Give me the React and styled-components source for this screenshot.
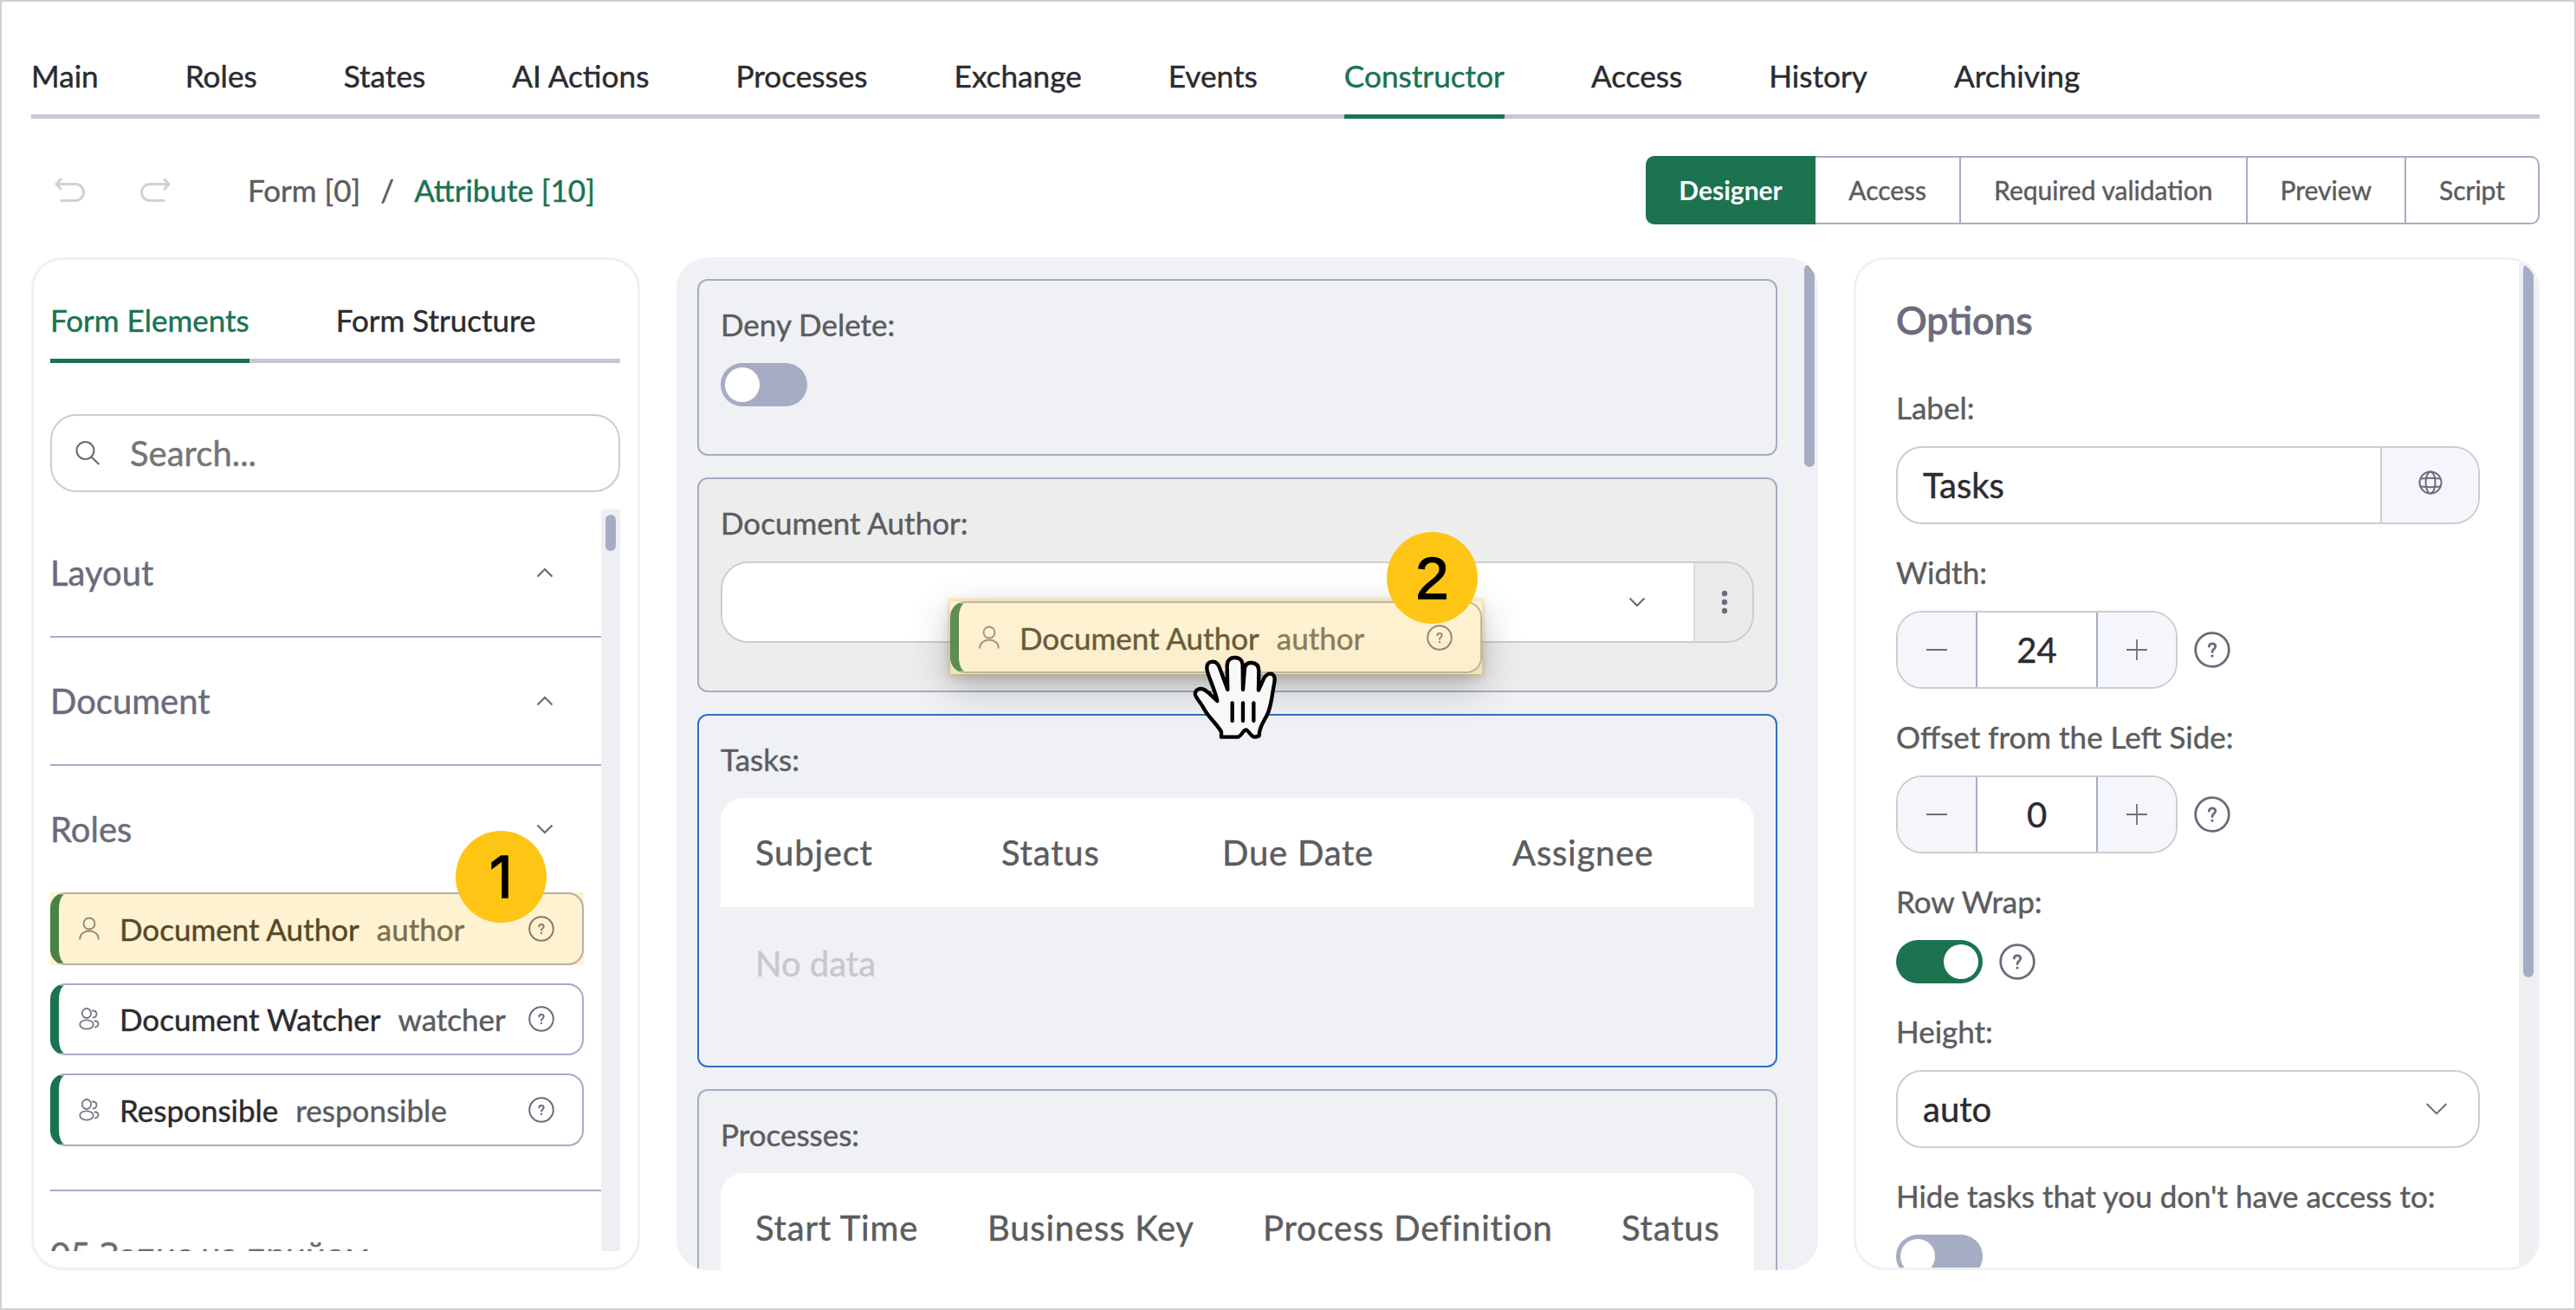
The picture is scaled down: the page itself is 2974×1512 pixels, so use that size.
import React from 'react'
import styled, { createGlobalStyle, css } from 'styled-components'

const color = {
  green: '#1b7350',
  text: '#2b2b30',
  label: '#5c5c5e',
  muted: '#6b6b7b',
  line: '#a8abc3',
  rule: '#c6c6d4',
  field: '#cccdcf',
  canvas: '#eff1f5',
  track: '#eeeff3',
  thumb: '#a5acc3',
  yellow: '#fec514',
}

const navTabs = [
  'Main',
  'Roles',
  'States',
  'AI Actions',
  'Processes',
  'Exchange',
  'Events',
  'Constructor',
  'Access',
  'History',
  'Archiving',
]

const modes = ['Designer', 'Access', 'Required validation', 'Preview', 'Script']

const roles = [
  { name: 'Document Author', alias: 'author', single: true, step: 1 },
  { name: 'Document Watcher', alias: 'watcher' },
  { name: 'Responsible', alias: 'responsible' },
]

export default function App() {
  return (
    <>
      <GlobalStyle />
      <Frame>
        <NavTabs>
          {navTabs.map(tab => (
            <NavTab key={tab} $active={tab === 'Constructor'}>
              {tab}
            </NavTab>
          ))}
        </NavTabs>
        <Toolbar>
          <History>
            <UndoIcon />
            <UndoIcon flip />
          </History>
          <Crumbs>
            <span>Form [0]</span>
            <span>/</span>
            <CurrentCrumb>Attribute [10]</CurrentCrumb>
          </Crumbs>
          <Segmented>
            {modes.map((mode, i) => (
              <Segment key={mode} $active={i === 0} $ruled={i > 1}>
                {mode}
              </Segment>
            ))}
          </Segmented>
        </Toolbar>
        <Columns>
          <ElementsPanel />
          <Canvas />
          <OptionsPanel />
        </Columns>
      </Frame>
    </>
  )
}

const ElementsPanel = () => (
  <SidePanel>
    <Tabs>
      <Tab $active>Form Elements</Tab>
      <Tab>Form Structure</Tab>
    </Tabs>
    <Search>
      <SearchIcon />
      <span>Search...</span>
    </Search>
    <ScrollArea>
      <Sections>
        <SectionHeader $ruled>
          Layout
          <Chevron up />
        </SectionHeader>
        <SectionHeader $ruled>
          Document
          <Chevron up />
        </SectionHeader>
        <SectionHeader>
          Roles
          <Chevron />
        </SectionHeader>
        <RoleList>
          {roles.map(role => (
            <RoleCard key={role.name}>
              <RoleContent {...role} />
              {role.step && <Highlight />}
              {role.step && <RoleBadge>{role.step}</RoleBadge>}
            </RoleCard>
          ))}
        </RoleList>
        <SectionHeader>05 Запис на прийом</SectionHeader>
      </Sections>
      <Track $width={22}>
        <Thumb $height={42} $top={6} />
      </Track>
    </ScrollArea>
  </SidePanel>
)

const RoleContent = ({ name, alias, single }) => (
  <>
    {single ? <UserIcon /> : <UsersIcon />}
    <RoleName>{name}</RoleName>
    <RoleAlias>{alias}</RoleAlias>
    <HelpIcon size={30} />
  </>
)

const Canvas = () => (
  <CanvasPanel>
    <Blocks>
      <Block $height={204}>
        <FieldLabel>Deny Delete:</FieldLabel>
        <Toggle />
      </Block>
      <Block $height={248} $target>
        <FieldLabel>Document Author:</FieldLabel>
        <AuthorSelect>
          <AuthorValue>
            <Chevron width={20} />
          </AuthorValue>
          <AuthorMenu>
            <Dots />
          </AuthorMenu>
        </AuthorSelect>
        <Ghost>
          <GhostCard>
            <RoleContent {...roles[0]} />
          </GhostCard>
          <Highlight />
          <GhostBadge>2</GhostBadge>
        </Ghost>
        <HandCursor />
      </Block>
      <Block $height={408} $selected>
        <FieldLabel>Tasks:</FieldLabel>
        <TableHead $columns="284px 255px 335px 1fr">
          <span>Subject</span>
          <span>Status</span>
          <span>Due Date</span>
          <span>Assignee</span>
        </TableHead>
        <EmptyRow>No data</EmptyRow>
      </Block>
      <Block $height={408}>
        <FieldLabel>Processes:</FieldLabel>
        <TableHead $columns="268px 318px 414px 1fr">
          <span>Start Time</span>
          <span>Business Key</span>
          <span>Process Definition</span>
          <span>Status</span>
        </TableHead>
      </Block>
    </Blocks>
    <Thumb $height={234} $top={8} />
  </CanvasPanel>
)

const Stepper = ({ value }) => (
  <Inline>
    <StepperBox>
      <StepButton>
        <PlusIcon minus />
      </StepButton>
      <StepValue>{value}</StepValue>
      <StepButton>
        <PlusIcon />
      </StepButton>
    </StepperBox>
    <HelpIcon size={42} />
  </Inline>
)

const OptionsPanel = () => (
  <RightPanel>
    <OptionsBody>
      <OptionsTitle>Options</OptionsTitle>
      <Field>
        <FieldLabel>Label:</FieldLabel>
        <TextBox>
          <TextValue>Tasks</TextValue>
          <TextAddon>
            <GlobeIcon />
          </TextAddon>
        </TextBox>
      </Field>
      <Field>
        <FieldLabel>Width:</FieldLabel>
        <Stepper value="24" />
      </Field>
      <Field>
        <FieldLabel>Offset from the Left Side:</FieldLabel>
        <Stepper value="0" />
      </Field>
      <Field>
        <FieldLabel>Row Wrap:</FieldLabel>
        <Inline>
          <Toggle $on />
          <HelpIcon size={42} />
        </Inline>
      </Field>
      <Field>
        <FieldLabel>Height:</FieldLabel>
        <TextBox>
          <TextValue>auto</TextValue>
          <SelectArrow>
            <Chevron width={28} thin />
          </SelectArrow>
        </TextBox>
      </Field>
      <Field>
        <FieldLabel>Hide tasks that you don't have access to:</FieldLabel>
        <Toggle />
      </Field>
    </OptionsBody>
    <Track $width={21}>
      <Thumb $height={823} $top={5} />
    </Track>
  </RightPanel>
)

// icons

const UndoIcon = ({ flip }) => (
  <svg
    width="36"
    height="30"
    viewBox="0 0 36 30"
    fill="none"
    stroke="#d0d1d4"
    strokeWidth="3"
    strokeLinecap="round"
    strokeLinejoin="round"
    transform={flip ? 'scale(-1 1)' : undefined}
  >
    <path d="M7 2L2 7.500l5 5.500M2 7.500h22a9.500 9.500 0 0 1 0 19H8" />
  </svg>
)

const SearchIcon = () => (
  <svg width="30" height="30" viewBox="0 0 30 30" fill="none" stroke="#6b6b6e" strokeWidth="2">
    <circle cx="12.500" cy="12" r="10" />
    <path d="M19.500 19.500L28.500 28" />
  </svg>
)

const Chevron = ({ up, width = 20, thin }) => (
  <svg
    width={width}
    height={width / 2 + 2}
    viewBox="0 0 20 12"
    fill="none"
    stroke={color.muted}
    strokeWidth={thin ? 1.5 : 2.2}
  >
    <path d={up ? 'M1.500 10.500L10 2l8.500 8.500' : 'M1.500 1.500L10 10l8.500-8.500'} />
  </svg>
)

const UserIcon = () => (
  <svg width="24" height="28" viewBox="0 0 24 28" fill="none" stroke="#77778a" strokeWidth="1.800">
    <circle cx="12" cy="8" r="6.500" />
    <path d="M1.200 26.500v-1a10.800 9 0 0 1 21.600 0v1" />
  </svg>
)

const UsersIcon = () => (
  <svg width="24" height="28" viewBox="0 0 24 28" fill="none" stroke="#77778a" strokeWidth="1.800">
    <ellipse cx="9" cy="7.500" rx="5.200" ry="5.500" />
    <ellipse cx="9" cy="20.500" rx="7.800" ry="5.200" />
    <path d="M16 4.500c3 0 4.500 1.500 4.500 3.800s-1.500 4-4 4.200" strokeLinecap="round" />
    <path d="M18.500 16.500c2.500 0 4 1.500 4 3.300s-1.500 3.400-3.500 3.700" strokeLinecap="round" />
  </svg>
)

const HelpIcon = ({ size }) => (
  <svg
    width={size}
    height={size}
    viewBox="0 0 42 42"
    fill="none"
    stroke={color.muted}
    strokeWidth="2.800"
    strokeLinecap="round"
  >
    <circle cx="21" cy="21" r="19.300" />
    <path d="M17.300 17.200c.2-2.200 1.800-3.300 3.700-3.300 2.200 0 3.800 1.300 3.800 3.300 0 3-3.800 3-3.800 6.300" />
    <path d="M21 28v.1" strokeWidth="3.200" />
  </svg>
)

const GlobeIcon = () => (
  <svg width="28" height="28" viewBox="0 0 28 28" fill="none" stroke={color.muted} strokeWidth="2">
    <circle cx="14" cy="14" r="12.500" />
    <ellipse cx="14" cy="14" rx="5.500" ry="12.500" />
    <path d="M2.500 9.500q11.500-1.500 23 0M2.500 18.500q11.500 1.500 23 0" />
  </svg>
)

const PlusIcon = ({ minus }) => (
  <svg width="24" height="24" viewBox="0 0 24 24" stroke="#6f6f7c" strokeWidth="1.800">
    <path d={minus ? 'M0 12h24' : 'M0 12h24M12 0v24'} />
  </svg>
)

const Dots = () => (
  <svg width="8" height="28" viewBox="0 0 8 28" fill={color.muted}>
    <circle cx="4" cy="4" r="3.200" />
    <circle cx="4" cy="14" r="3.200" />
    <circle cx="4" cy="24" r="3.200" />
  </svg>
)

const HandCursor = () => (
  <Hand viewBox="0 0 336 336">
    <path
      d="M120 308V290C104 262 74 238 60 210C50 190 34 176 30 162C27 146 42 138 56 142C74 148 88 168 106 183C100 150 82 115 72 82C67 62 72 51 84 48C98 45 108 52 114 68L142 144L140 64C139 44 150 33 167 33C184 33 194 44 194 62L195 144L201 70C203 56 212 50 225 51C241 52 250 62 250 78L249 146L268 104C276 90 288 87 297 91C307 96 306 110 303 124C296 160 294 194 282 224C272 250 250 270 251 304L238 308C222 310 216 284 205 283C194 284 190 308 176 308Z"
      fill="#f8f8f8"
      stroke="#000"
      strokeWidth="13"
      strokeLinejoin="round"
    />
    <path
      d="M158 190v62M195 190v62M232 190v62"
      stroke="#000"
      strokeWidth="13"
      strokeLinecap="round"
    />
  </Hand>
)

const GlobalStyle = createGlobalStyle`
  * {
    box-sizing: border-box;
  }
  body {
    margin: 0;
    background: white;
    font-family: Lato, 'Open Sans', sans-serif;
    -webkit-text-stroke: 0.45px;
  }
  svg {
    display: block;
    flex: none;
  }
`

const Frame = styled.div`
  width: 2974px;
  height: 1512px;
  padding: 0 40px 0 34px;
  border: 2px solid #d0d0d0;
  background: white;
  overflow: hidden;
`

const Tabs = styled.div`
  display: flex;
  gap: 100px;
  border-bottom: 5px solid ${color.rule};
`

const NavTabs = styled(Tabs).attrs({ as: 'nav' })``

const Tab = styled.div`
  padding-bottom: 24px;
  margin-bottom: -5px;
  border-bottom: 5px solid ${props => (props.$active ? color.green : 'transparent')};
  color: ${props => (props.$active ? color.green : color.text)};
  font-size: 35px;
  line-height: 42px;
  white-space: nowrap;
`

const NavTab = styled(Tab)`
  padding-top: 64px;
  font-size: 35.2px;
`

const Toolbar = styled.div`
  display: flex;
  align-items: center;
  height: 160px;
  padding: 43px 0 38px;
`

const History = styled.div`
  display: flex;
  gap: 62px;
  padding-left: 27px;
`

const Crumbs = styled.div`
  display: flex;
  gap: 23px;
  margin: -2px 0 0 89px;
  color: ${color.label};
  font-size: 35px;
  line-height: 42px;
`

const CurrentCrumb = styled.span`
  color: ${color.green};
`

const Segmented = styled.div`
  display: flex;
  height: 79px;
  margin-left: auto;
  border: 2px solid ${color.line};
  border-left: 0;
  border-radius: 10px;
`

const Segment = styled.div`
  display: flex;
  align-items: center;
  padding: 0 38px 2px;
  border-left: ${props => (props.$ruled ? `2px solid ${color.line}` : 0)};
  color: ${color.label};
  font-size: 30px;

  ${props =>
    props.$active &&
    css`
      margin: -2px 0;
      padding: 0 38.5px 2px;
      background: ${color.green};
      border-radius: 10px 0 0 10px;
      color: white;
      font-weight: bold;
      -webkit-text-stroke: 0;
    `};
`

const Columns = styled.div`
  display: flex;
  justify-content: space-between;
  height: 1169px;
`

const SidePanel = styled.aside`
  width: 703px;
  padding: 48px 20px 0 19px;
  border: 3px solid #eff0f2;
  border-radius: 36px;
`

const Search = styled.div`
  display: flex;
  align-items: center;
  gap: 34px;
  height: 90px;
  margin-top: 59px;
  padding: 0 0 1px 26px;
  border: 2px solid ${color.field};
  border-radius: 30px;
  color: #757575;
  font-size: 40px;
`

const ScrollArea = styled.div`
  display: flex;
  height: 856px;
  margin-top: 20px;
  overflow: hidden;
`

const Sections = styled.div`
  flex: 1;
`

const SectionHeader = styled.div`
  display: flex;
  align-items: center;
  justify-content: space-between;
  height: ${props => (props.$ruled ? 148 : 146)}px;
  padding-right: 55px;
  border-bottom: ${props => (props.$ruled ? `2px solid ${color.line}` : 0)};
  color: ${color.muted};
  font-size: 40px;
`

const RoleList = styled.div`
  display: flex;
  flex-direction: column;
  gap: 21px;
  padding-bottom: 50px;
  border-bottom: 2px solid ${color.line};
`

const RoleCard = styled.div`
  position: relative;
  display: flex;
  align-items: center;
  width: 616px;
  height: 83.5px;
  padding: 0 32px 0 23px;
  background: white;
  border: 2px solid ${color.line};
  border-left: 10px solid ${color.green};
  border-radius: 18px;
  font-size: 35px;

  & > svg:last-of-type {
    margin-left: auto;
  }
`

const RoleName = styled.span`
  margin-left: 23px;
  color: ${color.text};
`

const RoleAlias = styled.span`
  margin-left: 20px;
  color: ${color.label};
`

const Highlight = styled.div`
  position: absolute;
  inset: -2px -2px -2px -12px;
  background: rgba(255, 190, 20, 0.2);
`

const Badge = styled.div`
  position: absolute;
  display: flex;
  align-items: center;
  justify-content: center;
  width: 105px;
  height: 106px;
  border-radius: 50%;
  background: ${color.yellow};
  color: black;
  font-family: Inter, Roboto, sans-serif;
  font-size: 66px;
  -webkit-text-stroke: 1.5px;
`

const RoleBadge = styled(Badge)`
  left: 458px;
  top: -73px;
`

const GhostBadge = styled(Badge)`
  left: 504px;
  top: -80px;
  font-family: 'Liberation Sans', Arial, sans-serif;
  font-size: 69px;
`

const Track = styled.div`
  display: flex;
  justify-content: center;
  width: ${props => props.$width}px;
  background: ${color.track};
`

const Thumb = styled.div`
  width: 12px;
  height: ${props => props.$height}px;
  margin-top: ${props => props.$top}px;
  border-radius: 6px;
  background: ${color.thumb};
`

const CanvasPanel = styled.main`
  display: flex;
  width: 1318px;
  background: ${color.canvas};
  border-radius: 36px;
  overflow: hidden;
`

const Blocks = styled.div`
  display: flex;
  flex-direction: column;
  gap: 25px;
  width: 1302.5px;
  padding: 25px 31px 0 24.5px;
`

const Block = styled.section`
  position: relative;
  flex: none;
  height: ${props => props.$height}px;
  padding: 32px 25px 0;
  background: ${props => (props.$target ? '#ededed' : 'transparent')};
  border: 2px solid ${props => (props.$selected ? '#2f6fc4' : color.line)};
  border-radius: 12px;
`

const FieldLabel = styled.div`
  margin-bottom: 27px;
  color: ${color.label};
  font-size: 35px;
  line-height: 36px;
`

const Toggle = styled.div`
  display: flex;
  justify-content: ${props => (props.$on ? 'flex-end' : 'flex-start')};
  width: 100px;
  height: 50px;
  padding: 5px;
  border-radius: 25px;
  background: ${props => (props.$on ? color.green : color.thumb)};

  &::before {
    content: '';
    width: 40px;
    border-radius: 50%;
    background: white;
  }
`

const AuthorSelect = styled.div`
  display: flex;
  height: 94px;
  border: 2px solid ${color.field};
  border-radius: 32px;
  overflow: hidden;
`

const AuthorValue = styled.div`
  flex: 1;
  display: flex;
  align-items: center;
  justify-content: flex-end;
  padding-right: 55px;
  background: white;
`

const AuthorMenu = styled.div`
  display: flex;
  align-items: center;
  justify-content: center;
  width: 68px;
  padding-left: 2px;
  background: #eaeaeb;
  border-left: 2px solid #dededf;
`

const Ghost = styled.div`
  position: absolute;
  z-index: 1;
  left: 290px;
  top: 141px;
  width: 614px;
  height: 84px;
  box-shadow: 0 14px 44px rgba(40, 44, 60, 0.3), 0 4px 10px rgba(40, 44, 60, 0.2);

  & > ${Highlight} {
    inset: -4px -3px;
  }
`

const GhostCard = styled(RoleCard)`
  width: 614px;
  height: 83px;
  opacity: 0.88;
`

const Hand = styled.svg`
  position: absolute;
  z-index: 2;
  left: 563px;
  top: 195px;
  width: 112px;
  height: 112px;
`

const TableHead = styled.div`
  display: grid;
  grid-template-columns: ${props => props.$columns};
  align-items: center;
  height: 126px;
  background: white;
  border-radius: 26px 26px 0 0;
  color: ${color.label};
  font-size: 40px;
  letter-spacing: 0.8px;

  span {
    padding-left: 40px;
    white-space: nowrap;
  }
`

const EmptyRow = styled.div`
  padding-left: 40px;
  color: #c8c8cc;
  font-size: 40px;
  line-height: 130px;
`

const RightPanel = styled.aside`
  display: flex;
  width: 792px;
  border: 3px solid #f0f1f3;
  border-radius: 36px;
  overflow: hidden;
`

const OptionsBody = styled.div`
  flex: 1;
  padding: 40px 0 0 46px;
`

const OptionsTitle = styled.h2`
  margin: 0 0 54px;
  color: ${color.muted};
  font-size: 44.6px;
  font-weight: 500;
  line-height: 58px;
  -webkit-text-stroke: 0.9px;
`

const Field = styled.div`
  width: 674px;
  margin-bottom: 37px;
`

const Inline = styled.div`
  display: flex;
  align-items: center;
  gap: 19px;
`

const TextBox = styled.div`
  display: flex;
  height: 90px;
  border: 2px solid ${color.field};
  border-radius: 30px;
  overflow: hidden;
`

const TextValue = styled.div`
  flex: 1;
  padding-left: 29px;
  color: ${color.text};
  font-size: 40px;
  line-height: 86px;
`

const TextAddon = styled.div`
  display: flex;
  align-items: center;
  justify-content: center;
  width: 113px;
  padding-bottom: 6px;
  border-left: 2px solid ${color.field};
  background: #f4f6fb;
`

const SelectArrow = styled.div`
  display: flex;
  align-items: center;
  padding-right: 34px;
`

const StepperBox = styled.div`
  display: flex;
  width: 325px;
  height: 90px;
  border: 2px solid ${color.field};
  border-radius: 30px;
  overflow: hidden;
`

const StepButton = styled.div`
  display: flex;
  align-items: center;
  justify-content: center;
  width: 90px;
  background: #f4f6fb;
`

const StepValue = styled.div`
  flex: 1;
  border: solid ${color.line};
  border-width: 0 2px;
  color: ${color.text};
  font-size: 40px;
  line-height: 86px;
  text-align: center;
`
